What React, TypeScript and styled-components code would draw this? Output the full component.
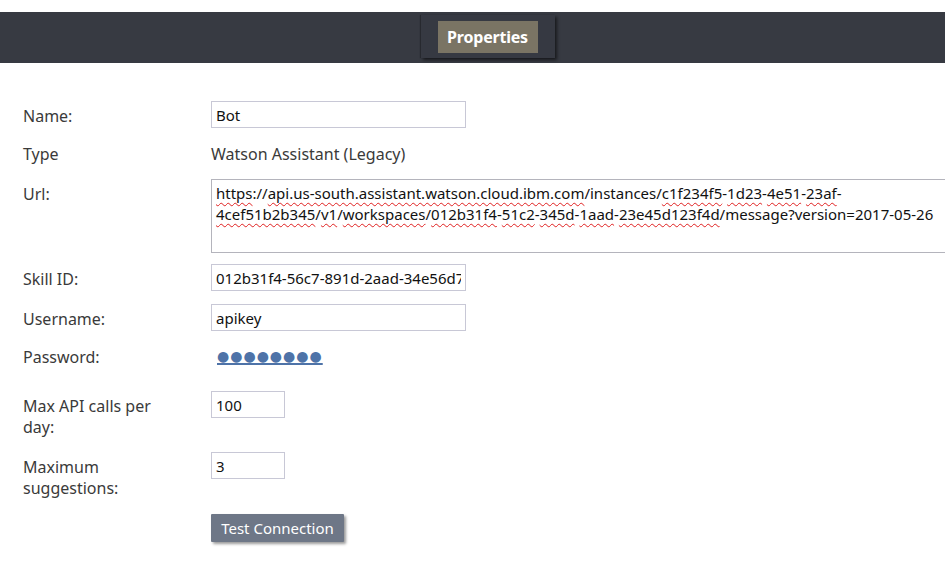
import React from "react";
import styled, { createGlobalStyle } from "styled-components";

const GlobalStyle = createGlobalStyle`
  html, body {
    margin: 0;
    padding: 0;
    overflow: hidden;
    background: #ffffff;
  }
  body {
    font-family: "Noto Sans", "Open Sans", sans-serif;
    font-size: 15px;
    color: #333333;
  }
`;

const Page = styled.div`
  width: 945px;
  height: 571px;
  padding-top: 12px;
  box-sizing: border-box;
  overflow: hidden;
`;

const Header = styled.div`
  height: 51px;
  background: #373a42;
  display: flex;
  justify-content: center;
  align-items: flex-start;
  padding-left: 30px;
  box-sizing: border-box;
`;

const TabFrame = styled.div`
  margin-top: 3px;
  padding: 6px 17px 5px 17px;
  background: #363942;
  box-shadow: 2px 2px 3px rgba(0, 0, 0, 0.55), -1px 0 1px rgba(0, 0, 0, 0.25);
`;

const TabButton = styled.div`
  width: 100px;
  height: 32px;
  background: #7a7464;
  color: #ffffff;
  font-weight: 700;
  font-size: 16px;
  display: flex;
  align-items: center;
  justify-content: center;
  letter-spacing: -0.2px;
`;

const Form = styled.div`
  display: flex;
  flex-direction: column;
  padding: 38px 0 0 23px;
`;

const Row = styled.div<{ $space?: number }>`
  display: flex;
  align-items: flex-start;
  margin-top: ${(p) => p.$space ?? 0}px;
`;

const Label = styled.div`
  width: 188px;
  flex: 0 0 188px;
  padding-top: 5px;
  padding-right: 40px;
  box-sizing: border-box;
  font-size: 16px;
  line-height: 21px;
  color: #3a3a3a;
`;

const Value = styled.div`
  padding-top: 5px;
  font-size: 16px;
  line-height: 21px;
  color: #3a3a3a;
`;

const TextInput = styled.input<{ $w: number }>`
  width: ${(p) => p.$w}px;
  height: 27px;
  box-sizing: border-box;
  border: 1px solid #c8c8d6;
  padding: 0 4px;
  margin: 0;
  font-family: "Noto Sans", "Open Sans", sans-serif;
  font-size: 15px;
  color: #111111;
  background: #ffffff;
  outline: none;
`;

const UrlBox = styled.div`
  width: 760px;
  height: 74px;
  flex: 0 0 auto;
  box-sizing: border-box;
  border: 1px solid #b4b4bc;
  padding: 3px 4px 2px 4px;
  line-height: 21px;
  color: #111111;
  white-space: nowrap;
`;

const Line = styled.div`
  white-space: nowrap;
`;

const Spell = styled.span`
  text-decoration: underline wavy #e02020;
  text-decoration-thickness: 1px;
  text-underline-offset: 3px;
  text-decoration-skip-ink: none;
`;

const PasswordLink = styled.a`
  margin-left: 6px;
  margin-top: 4px;
  color: #4e73a8;
  font-family: "DejaVu Sans", sans-serif;
  font-size: 14px;
  letter-spacing: 1px;
  line-height: 21px;
  text-decoration: underline;
  text-decoration-thickness: 2px;
  text-underline-offset: 2px;
  cursor: pointer;
`;

const TestButton = styled.button`
  margin-left: 188px;
  width: 133px;
  height: 28px;
  border: none;
  border-radius: 1px;
  background: #6e7787;
  color: #ffffff;
  font-family: "Noto Sans", "Open Sans", sans-serif;
  font-size: 15px;
  padding: 0;
  box-shadow: 2px 2px 3px rgba(0, 0, 0, 0.4);
  cursor: pointer;
`;

export default function App() {
  return (
    <>
      <GlobalStyle />
      <Page>
        <Header>
          <TabFrame>
            <TabButton>Properties</TabButton>
          </TabFrame>
        </Header>
        <Form>
          <Row>
            <Label>Name:</Label>
            <TextInput $w={255} defaultValue="Bot" />
          </Row>
          <Row $space={11}>
            <Label>Type</Label>
            <Value>Watson Assistant (Legacy)</Value>
          </Row>
          <Row $space={14}>
            <Label>Url:</Label>
            <UrlBox role="textbox">
              <Line>
                <Spell>https</Spell>://<Spell>api.us-south.assistant.watson.cloud.ibm.com</Spell>/instances/
                <Spell>c1f234f5</Spell>-<Spell>1d23</Spell>-<Spell>4e51</Spell>-<Spell>23af</Spell>-
              </Line>
              <Line>
                <Spell>4cef51b2b345</Spell>/<Spell>v1</Spell>/<Spell>workspaces</Spell>/<Spell>012b31f4</Spell>-
                <Spell>51c2</Spell>-<Spell>345d</Spell>-<Spell>1aad</Spell>-<Spell>23e45d123f4d</Spell>
                /message?version=2017-05-26
              </Line>
            </UrlBox>
          </Row>
          <Row $space={11}>
            <Label>Skill ID:</Label>
            <TextInput $w={255} defaultValue="012b31f4-56c7-891d-2aad-34e56d7f8a9b" />
          </Row>
          <Row $space={13}>
            <Label>Username:</Label>
            <TextInput $w={255} defaultValue="apikey" />
          </Row>
          <Row $space={11}>
            <Label>Password:</Label>
            <PasswordLink>●●●●●●●●</PasswordLink>
          </Row>
          <Row $space={23}>
            <Label>Max API calls per day:</Label>
            <TextInput $w={74} defaultValue="100" />
          </Row>
          <Row $space={14}>
            <Label>Maximum suggestions:</Label>
            <TextInput $w={74} defaultValue="3" />
          </Row>
          <Row $space={15}>
            <TestButton>Test Connection</TestButton>
          </Row>
        </Form>
      </Page>
    </>
  );
}
